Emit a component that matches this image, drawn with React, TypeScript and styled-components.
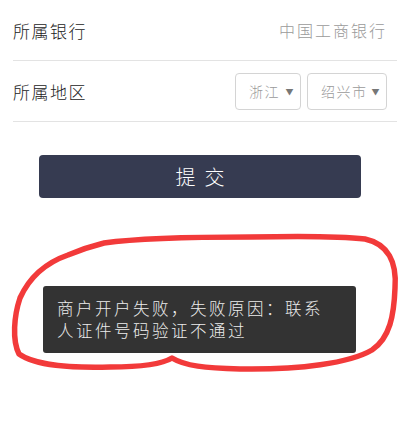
import React from 'react';
import styled, { createGlobalStyle } from 'styled-components';

const GlobalStyle = createGlobalStyle`
  html, body {
    margin: 0;
    padding: 0;
    background: #ffffff;
  }
  body {
    font-family: "Noto Sans CJK SC", "Noto Sans", sans-serif;
    font-weight: 300;
  }
`;

const Page = styled.div`
  position: relative;
  width: 407px;
  height: 422px;
  background: #ffffff;
  overflow: hidden;
`;

const Form = styled.div`
  padding: 0 10px 0 13px;
`;

const Row = styled.div`
  display: flex;
  align-items: center;
  justify-content: space-between;
  height: 60px;
  border-bottom: 1px solid #e3e3e3;
`;

const Label = styled.span`
  font-size: 17px;
  letter-spacing: 1.5px;
  color: #222222;
`;

const Value = styled.span`
  font-size: 16px;
  letter-spacing: 2px;
  color: #9a9a9a;
  margin-right: 10px;
`;

const Selects = styled.div`
  display: flex;
  gap: 6px;
  margin-right: 10px;
`;

const Select = styled.div<{ $w: number }>`
  box-sizing: border-box;
  width: ${p => p.$w}px;
  height: 37px;
  display: flex;
  align-items: center;
  justify-content: space-between;
  padding: 0 5px 0 13px;
  border: 1px solid #d4d4d4;
  border-radius: 4px;
  font-size: 14px;
  letter-spacing: 1.5px;
  color: #9a9a9a;
`;

const Arrow = styled.span`
  font-size: 8px;
  color: #777777;
`;

const SubmitButton = styled.button`
  display: block;
  box-sizing: border-box;
  width: 322px;
  height: 43px;
  margin: 33px 0 0 39px;
  border: none;
  border-radius: 4px;
  background: #363b51;
  color: #ffffff;
  font-family: inherit;
  font-weight: 300;
  font-size: 20px;
  letter-spacing: 9px;
  text-indent: 9px;
`;

const Toast = styled.div`
  box-sizing: border-box;
  width: 313px;
  height: 67px;
  margin: 88px 0 0 43px;
  padding: 11px 30px 0 14px;
  border-radius: 3px;
  background: #333333;
  color: #ececec;
  font-size: 16.5px;
  line-height: 22px;
  letter-spacing: 2.5px;
`;

const Scribble = styled.svg`
  position: absolute;
  left: 0;
  top: 0;
  pointer-events: none;
`;

export default function App() {
  return (
    <Page>
      <GlobalStyle />
      <Form>
        <Row>
          <Label>所属银行</Label>
          <Value>中国工商银行</Value>
        </Row>
        <Row>
          <Label>所属地区</Label>
          <Selects>
            <Select $w={66}>
              <span>浙江</span>
              <Arrow>▼</Arrow>
            </Select>
            <Select $w={80}>
              <span>绍兴市</span>
              <Arrow>▼</Arrow>
            </Select>
          </Selects>
        </Row>
      </Form>
      <SubmitButton>提交</SubmitButton>
      <Toast>商户开户失败，失败原因：联系人证件号码验证不通过</Toast>
      <Scribble width="407" height="422" viewBox="0 0 407 422">
        <path
          d="M104 243 C140 238 200 237 250 237 C300 236 340 236 365 239 C388 244 397 262 395 288 C394 315 390 338 372 350 C350 363 300 370 240 369 C205 368 185 366 172 358 C164 363 148 367 110 367 C70 368 36 366 19 354 C12 340 14 316 20 298 C30 276 48 262 68 255 C80 250 92 246 104 243"
          fill="none"
          stroke="#f23a3a"
          strokeWidth="5.5"
          strokeLinecap="round"
          strokeLinejoin="round"
        />
      </Scribble>
    </Page>
  );
}
